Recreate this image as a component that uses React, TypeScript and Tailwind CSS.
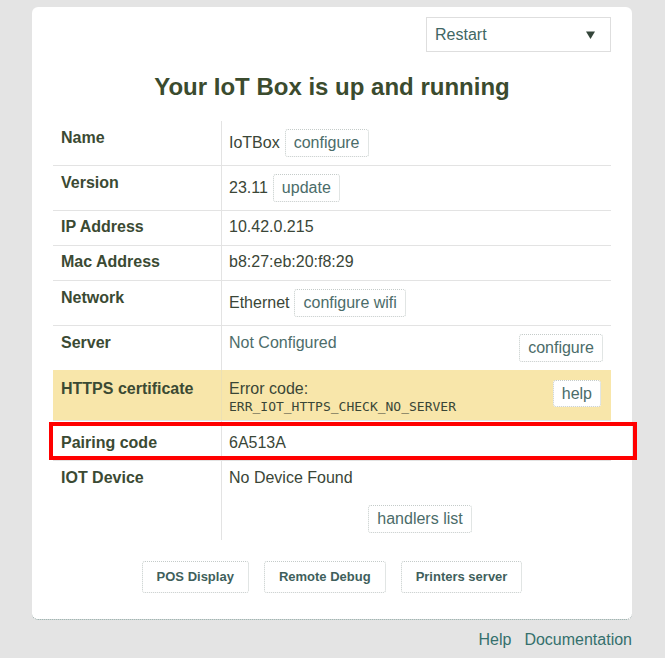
import clsx from "clsx";

const SANS = "font-['Liberation_Sans',Arial,sans-serif]";

const Chip = ({ label, className }: { label: string; className?: string }) => (
  <button
    type="button"
    className={clsx(
      "inline-flex h-7 shrink-0 items-center rounded-[3px] border border-dotted border-[#c4cbc9] bg-white px-[8px] text-[16px] leading-5 text-[#4b6c69]",
      className
    )}
  >
    {label}
  </button>
);

const Label = ({ text, className }: { text: string; className?: string }) => (
  <div className={clsx("w-[168px] shrink-0 pl-2 font-bold leading-5 text-[#3b4a33]", className)}>
    {text}
  </div>
);

const ButtonRow = ({ name, value, action, top }: { name: string; value: string; action: string; top?: boolean }) => (
  <div className={clsx("flex", top || "border-t border-[#e3e3e3]")}>
    <Label text={name} className="pt-[7px]" />
    <div className="flex flex-1 items-center gap-[5px] border-l border-[#e3e3e3] py-2 pl-[7px]">
      <span>{value}</span>
      <Chip label={action} />
    </div>
  </div>
);

const TextRow = ({ name, value }: { name: string; value: string }) => (
  <div className="flex border-t border-[#e3e3e3]">
    <Label text={name} className="pt-[6px]" />
    <div className="flex-1 border-l border-[#e3e3e3] pb-2 pl-[7px] pt-[6px]">{value}</div>
  </div>
);

export default function App() {
  return (
    <div className={clsx("min-h-screen bg-[#e4e4e4] pt-[7px] text-[16px] leading-5 text-[#3a4637]", SANS)}>
      <div className="ml-[32px] w-[600px] rounded-[6px] border-b border-dotted border-[#6f8a86] bg-white px-[21px] pb-[26px] pt-[10px]">
        <div className="flex justify-end">
          <div className="flex h-[35px] w-[185px] items-center justify-between border border-[#dedede] pl-2 pr-[15px] text-[#3f6764]">
            <span>Restart</span>
            <svg width="9" height="8" viewBox="0 0 9 8" aria-hidden>
              <path d="M0 0.5h9L4.5 8z" fill="#34453a" />
            </svg>
          </div>
        </div>

        <h1 className="mt-[21px] text-center text-[24px] font-bold leading-7 text-[#3b4b2e]">
          Your IoT Box is up and running
        </h1>

        <div className="mt-[20px]">
          <ButtonRow name="Name" value="IoTBox" action="configure" top />
          <ButtonRow name="Version" value="23.11" action="update" />
          <TextRow name="IP Address" value="10.42.0.215" />
          <TextRow name="Mac Address" value="b8:27:eb:20:f8:29" />
          <ButtonRow name="Network" value="Ethernet" action="configure wifi" />

          <div className="flex border-t border-[#e3e3e3]">
            <Label text="Server" className="pt-[7px]" />
            <div className="flex flex-1 items-start justify-between border-l border-[#e3e3e3] pl-[7px]">
              <span className="pt-[7px] text-[#4d6d6a]">Not Configured</span>
              <Chip label="configure" className="my-2 mr-2" />
            </div>
          </div>

          <div className="flex bg-[#f8e6aa]">
            <Label text="HTTPS certificate" className="pt-[9px]" />
            <div className="flex flex-1 items-start justify-between border-l border-[#ece0b4] pb-[5px] pl-[7px] pt-[9px]">
              <div>
                <div>Error code:</div>
                <div className="font-['DejaVu_Sans_Mono',monospace] text-[13px] leading-4">
                  ERR_IOT_HTTPS_CHECK_NO_SERVER
                </div>
              </div>
              <Chip label="help" className="mr-[10px] mt-px h-[27px]" />
            </div>
          </div>

          <div className="relative flex border-t border-[#e3e3e3]">
            <Label text="Pairing code" className="pb-[7px] pt-[12px]" />
            <div className="flex-1 border-l border-[#e3e3e3] pb-[7px] pl-[7px] pt-[12px]">6A513A</div>
            <div className="pointer-events-none absolute -left-[4px] -right-[26px] top-px h-[38px] border-4 border-[#ff0000]" />
          </div>

          <div className="flex border-t border-[#e3e3e3]">
            <Label text="IOT Device" className="pt-[7px]" />
            <div className="flex flex-1 flex-col border-l border-[#e3e3e3] pb-[7px] pl-[7px] pt-[7px]">
              <span>No Device Found</span>
              <Chip label="handlers list" className="mt-[17px] self-center" />
            </div>
          </div>
        </div>

        <div className="mt-[21px] flex justify-center gap-[15px]">
          {["POS Display", "Remote Debug", "Printers server"].map((label) => (
            <button
              key={label}
              type="button"
              className="h-8 rounded-[3px] border border-dotted border-[#c4cbc9] bg-white px-[14px] text-[13px] font-bold text-[#3f5f5c]"
            >
              {label}
            </button>
          ))}
        </div>
      </div>

      <div className="ml-[32px] mt-[10px] flex w-[600px] justify-end gap-[13px] text-[#35706d]">
        <a href="#">Help</a>
        <a href="#">Documentation</a>
      </div>
    </div>
  );
}
